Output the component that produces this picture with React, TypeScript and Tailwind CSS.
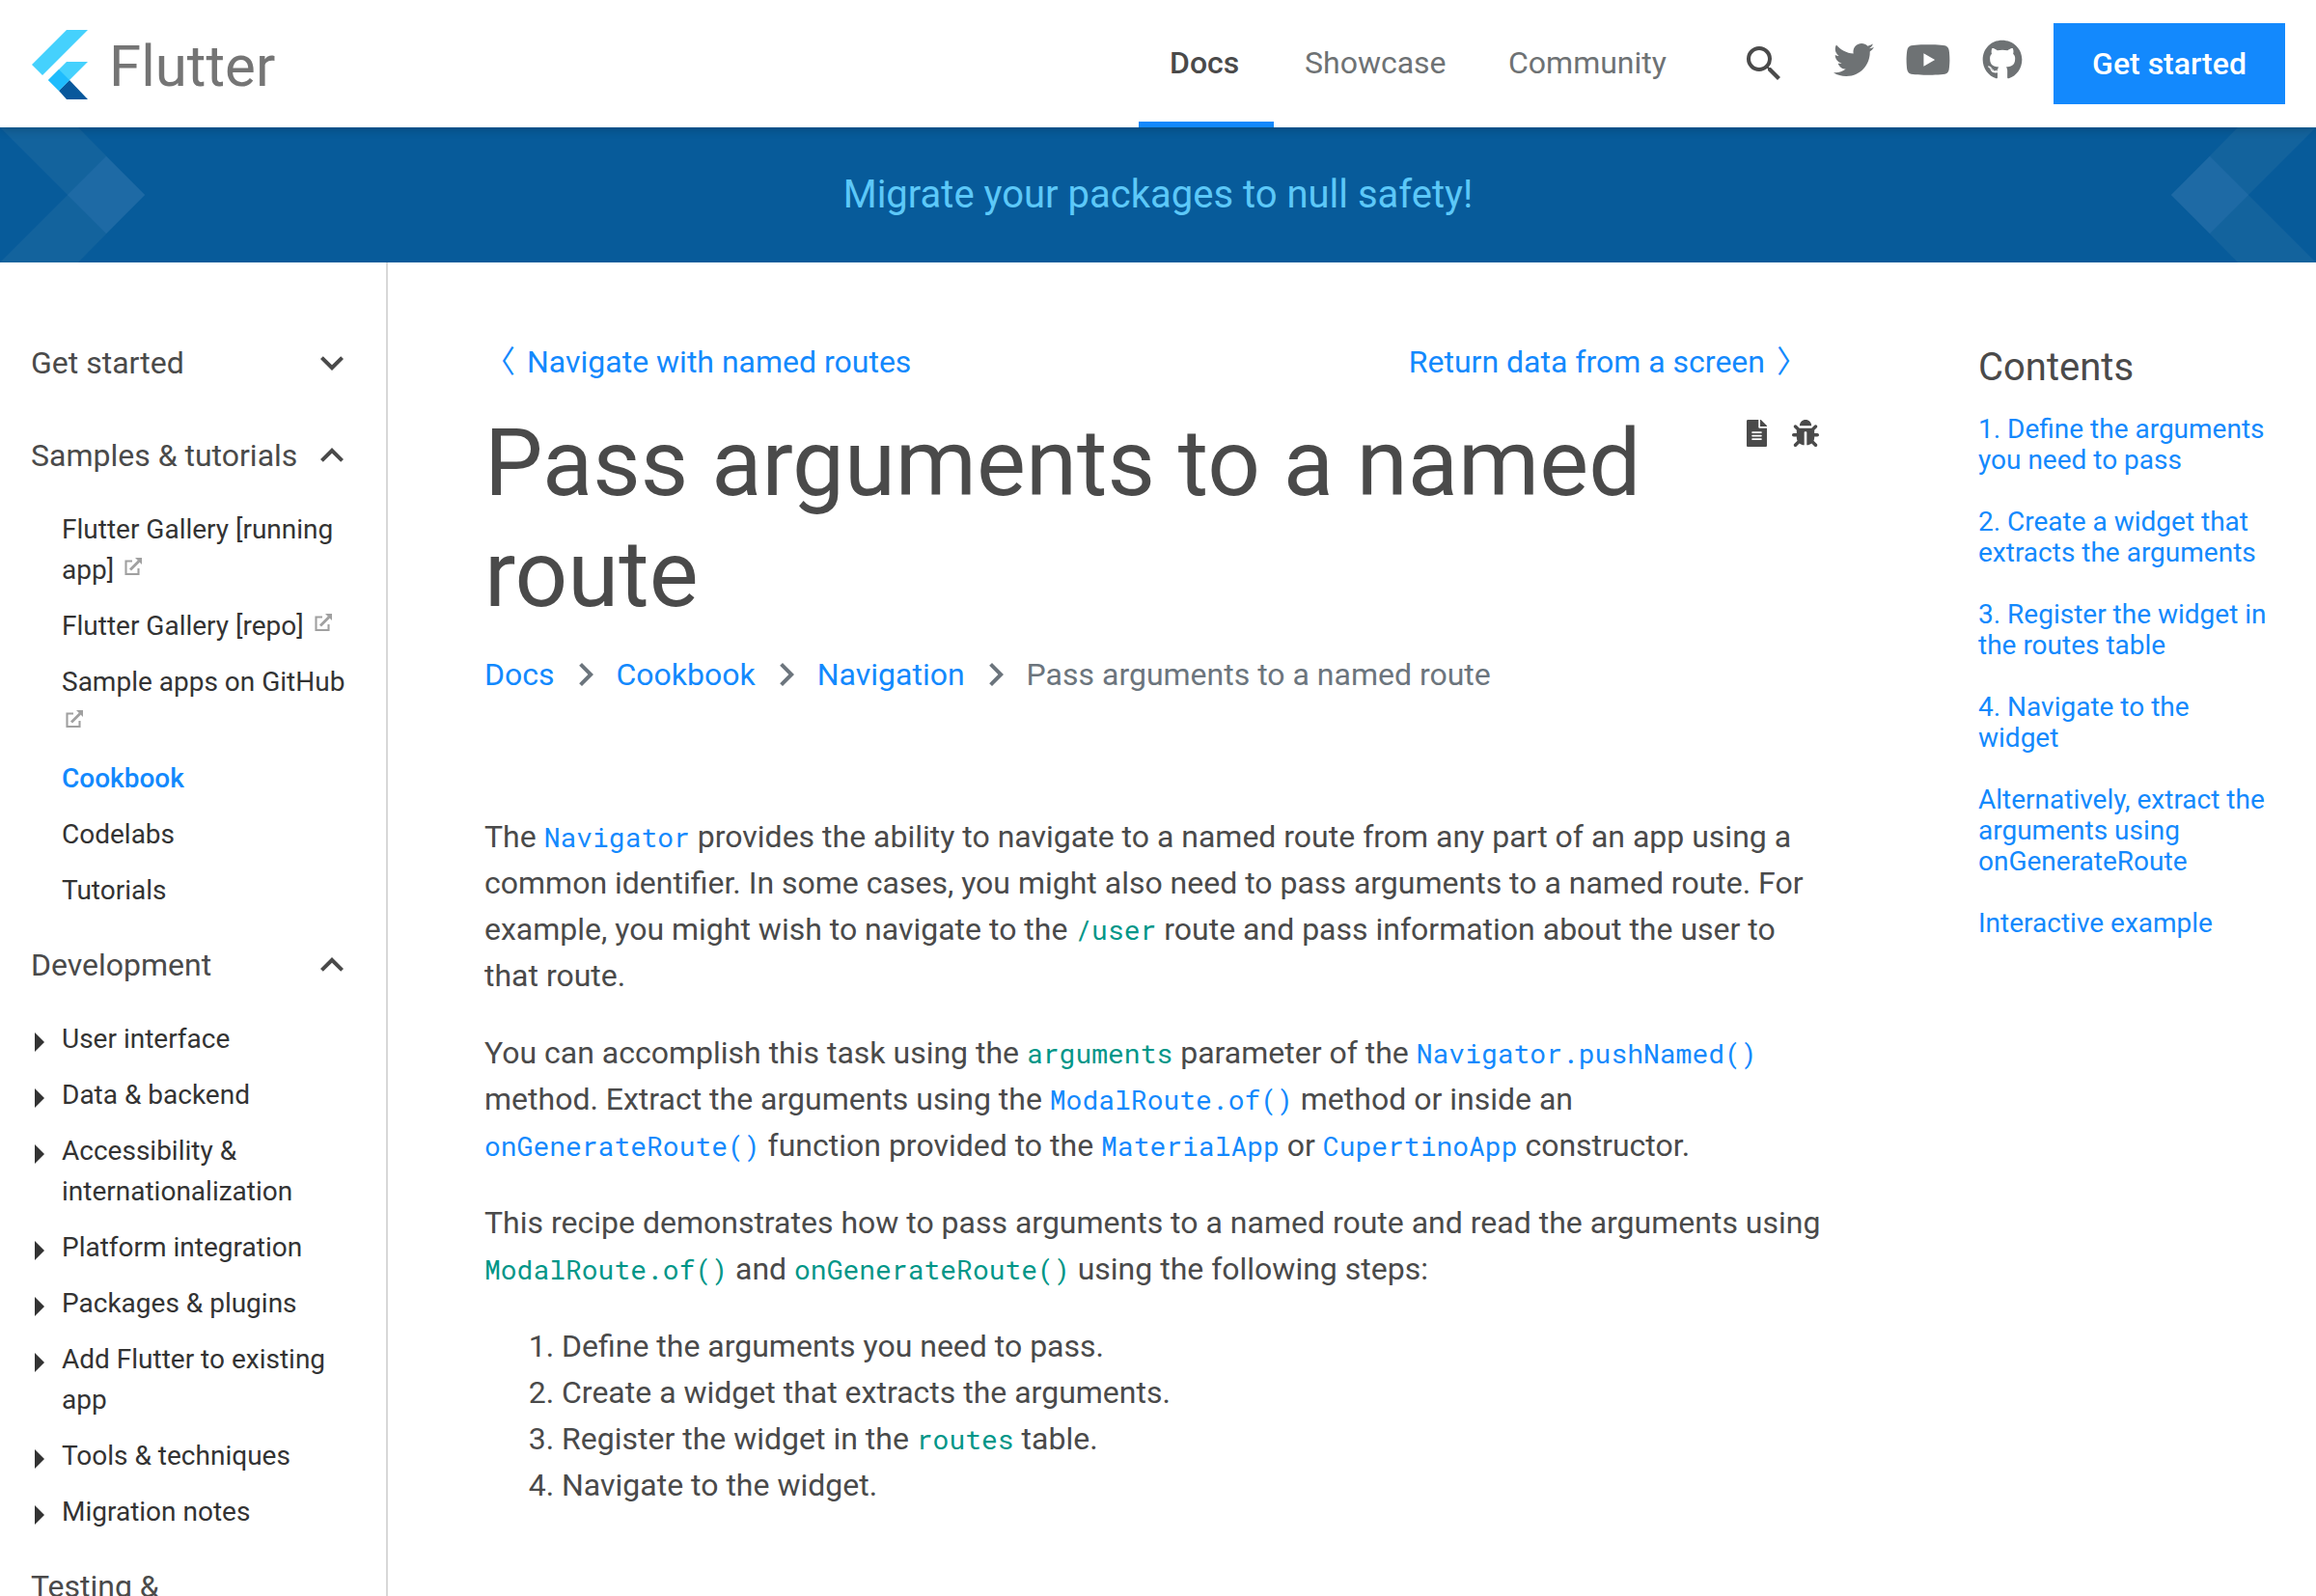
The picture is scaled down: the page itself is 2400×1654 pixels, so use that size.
import type { ReactNode } from "react";
import { FaBug, FaFileAlt, FaGithub, FaTwitter, FaYoutube } from "react-icons/fa";
import { MdChevronRight, MdExpandLess, MdExpandMore, MdSearch } from "react-icons/md";

function FlutterMark() {
  return (
    <svg viewBox="0 0 58 72" className="h-[72px] w-[58px]" aria-hidden="true">
      <path d="M36 0H58L11 47L0 36Z" fill="#45d1fd" />
      <path d="M36 33H58L28 63L17 52Z" fill="#45d1fd" />
      <path d="M39 52L58 72H36L28 63Z" fill="#08589c" />
      <path d="M28 41L39 52L28 63L17 52Z" fill="#1fbcfd" />
    </svg>
  );
}

function BannerChevron({ className }: { className: string }) {
  return (
    <svg viewBox="0 0 150 140" className={className} aria-hidden="true">
      <path d="M0 0H81L150 70L110 110Z" fill="#13639d" />
      <path d="M0 140H81L150 70L110 30Z" fill="#13639d" />
      <path d="M70 70L110 30L150 70L110 110Z" fill="#1e6aa5" />
    </svg>
  );
}

function ExternalIcon() {
  return (
    <svg viewBox="0 0 18 18" className="ml-1 inline h-[18px] w-[18px] -translate-y-1 align-baseline" aria-hidden="true">
      <path d="M8 3.5H1.5V17H14.5V11" fill="none" stroke="#a0a0a0" strokeWidth="2.1" />
      <path d="M6 12.5L15 3.5" stroke="#a0a0a0" strokeWidth="2.8" />
      <path d="M11 0H18V7Z" fill="#a0a0a0" />
    </svg>
  );
}

function Heading({ label, open }: { label: string; open?: boolean }) {
  const Icon = open ? MdExpandLess : MdExpandMore;
  return (
    <button className="flex w-full items-center justify-between py-6 pl-8 pr-8 text-left text-[32px] leading-[48px] text-[#4a4a4a]">
      <span>{label}</span>
      <Icon className="h-12 w-12 shrink-0" />
    </button>
  );
}

function Item({ label, external, active, arrow }: { label: string; external?: boolean; active?: boolean; arrow?: boolean }) {
  return (
    <li>
      <a href="#" className={active ? "flex py-2 pl-9 pr-6 font-medium text-[#1389fd]" : "flex py-2 pl-9 pr-6 text-[#333]"}>
        <span className="w-7 shrink-0 pt-[14px]">
          {arrow && (
            <svg viewBox="0 0 10 20" className="h-5 w-[10px]" aria-hidden="true">
              <path d="M0 0L10 10L0 20Z" fill="#333" />
            </svg>
          )}
        </span>
        <span>
          {label}
          {external && <> <ExternalIcon /></>}
        </span>
      </a>
    </li>
  );
}

function Code({ children }: { children: ReactNode }) {
  return <code className="font-['Roboto_Mono','Liberation_Mono',monospace] text-[28px] leading-none text-[#009688]">{children}</code>;
}

function CodeLink({ children }: { children: ReactNode }) {
  return (
    <a href="#" className="font-['Roboto_Mono','Liberation_Mono',monospace] text-[28px] leading-none text-[#1389fd]">
      {children}
    </a>
  );
}

const crumbs = ["Docs", "Cookbook", "Navigation"];
const contents = [
  "1. Define the arguments you need to pass",
  "2. Create a widget that extracts the arguments",
  "3. Register the widget in the routes table",
  "4. Navigate to the widget",
  "Alternatively, extract the arguments using onGenerateRoute",
  "Interactive example",
];
const development = [
  "User interface",
  "Data & backend",
  "Accessibility & internationalization",
  "Platform integration",
  "Packages & plugins",
  "Add Flutter to existing app",
  "Tools & techniques",
  "Migration notes",
];

export default function App() {
  return (
    <div className="flex h-screen flex-col overflow-hidden bg-white font-[Roboto,'Noto_Sans_CJK_SC',sans-serif] text-[32px] leading-[48px] text-[#4a4a4a]">
      <header className="relative z-10 flex h-[132px] shrink-0 items-center pl-[33px] pr-8 shadow-[0_2px_10px_rgba(0,0,0,0.2)]">
        <a href="#" className="flex items-center gap-[22px] pt-0.5 text-[#757575]">
          <FlutterMark />
          <span className="pt-1 text-[60px] leading-[72px]">Flutter</span>
        </a>
        <nav className="ml-auto flex self-stretch leading-[130px] text-[#6e7274]">
          <a href="#" className="w-[140px] border-b-[6px] border-[#1389fd] px-8 font-medium text-[#4a4a4a]">Docs</a>
          <a href="#" className="w-[211px] px-8">Showcase</a>
          <a href="#" className="w-[233px] px-8">Community</a>
        </nav>
        <button aria-label="Search" className="ml-10 mr-12 text-[#4a4a4a]">
          <MdSearch className="h-12 w-12" />
        </button>
        <div className="mb-2 flex gap-8 text-[#6e7274]">
          <a href="#" aria-label="Twitter"><FaTwitter className="h-[42px] w-[42px]" /></a>
          <a href="#" aria-label="YouTube"><FaYoutube className="h-[42px] w-12" /></a>
          <a href="#" aria-label="GitHub"><FaGithub className="h-[42px] w-[42px]" /></a>
        </div>
        <button className="ml-8 w-60 bg-[#1389fd] py-[18px] font-medium text-white">Get started</button>
      </header>

      <div className="flex h-[140px] shrink-0 items-center justify-between bg-[#075b9a]">
        <BannerChevron className="h-[140px] w-[150px]" />
        <a href="#" className="text-[40px] text-[#5cc8f8]">Migrate your packages to null safety!</a>
        <BannerChevron className="h-[140px] w-[150px] rotate-180" />
      </div>

      <div className="flex min-h-0 flex-1">
        <aside className="w-[402px] shrink-0 overflow-hidden border-r-2 border-[#d8d8d8] pt-14">
          <Heading label="Get started" />
          <Heading label="Samples & tutorials" open />
          <ul className="text-[28px] leading-[42px]">
            <Item label="Flutter Gallery [running app]" external />
            <Item label="Flutter Gallery [repo]" external />
            <Item label="Sample apps on GitHub" external />
            <Item label="Cookbook" active />
            <Item label="Codelabs" />
            <Item label="Tutorials" />
          </ul>
          <Heading label="Development" open />
          <ul className="text-[28px] leading-[42px]">
            {development.map((label) => (
              <Item key={label} label={label} arrow />
            ))}
          </ul>
          <Heading label="Testing & debugging" />
        </aside>

        <main className="flex-1 pl-[100px] pr-[161px] pt-[79px]">
          <div className="flex justify-between text-[#1389fd]">
            <a href="#" className="flex gap-3"><span>〈</span>Navigate with named routes</a>
            <a href="#" className="mr-4 flex gap-3">Return data from a screen<span>〉</span></a>
          </div>
          <div className="mt-6 flex justify-between">
            <h1 className="text-[96px] leading-[115px]">Pass arguments to a named route</h1>
            <div className="mr-1 flex shrink-0 gap-[26px] pt-3">
              <a href="#" aria-label="View page source"><FaFileAlt className="h-7 w-[21px]" /></a>
              <a href="#" aria-label="Report an issue"><FaBug className="h-7 w-7" /></a>
            </div>
          </div>
          <nav aria-label="Breadcrumb" className="mt-[22px] flex items-center text-[#6c757d]">
            {crumbs.map((crumb) => (
              <span key={crumb} className="flex items-center">
                <a href="#" className="text-[#1389fd]">{crumb}</a>
                <MdChevronRight className="mx-2 h-12 w-12" />
              </span>
            ))}
            <span>Pass arguments to a named route</span>
          </nav>

          <div className="mt-[120px] flex flex-col gap-8">
            <p>
              The <CodeLink>Navigator</CodeLink> provides the ability to navigate to a named route from any part of an app using a
              common identifier. In some cases, you might also need to pass arguments to a named route. For example, you might wish
              to navigate to the <Code>/user</Code> route and pass information about the user to that route.
            </p>
            <p>
              You can accomplish this task using the <Code>arguments</Code> parameter of the{" "}
              <CodeLink>Navigator.pushNamed()</CodeLink> method. Extract the arguments using the{" "}
              <CodeLink>ModalRoute.of()</CodeLink> method or inside an <CodeLink>onGenerateRoute()</CodeLink> function provided to
              the <CodeLink>MaterialApp</CodeLink> or <CodeLink>CupertinoApp</CodeLink> constructor.
            </p>
            <p>
              This recipe demonstrates how to pass arguments to a named route and read the arguments using{" "}
              <Code>ModalRoute.of()</Code> and <Code>onGenerateRoute()</Code> using the following steps:
            </p>
            <ol className="list-decimal pl-20">
              <li>Define the arguments you need to pass.</li>
              <li>Create a widget that extracts the arguments.</li>
              <li>Register the widget in the <Code>routes</Code> table.</li>
              <li>Navigate to the widget.</li>
            </ol>
          </div>
        </main>

        <aside className="w-[350px] shrink-0 pr-12 pt-[85px]">
          <h2 className="text-[40px]">Contents</h2>
          <ul className="mt-6 flex flex-col gap-8 text-[28px] leading-8">
            {contents.map((entry) => (
              <li key={entry}>
                <a href="#" className="block text-[#1389fd]">{entry}</a>
              </li>
            ))}
          </ul>
        </aside>
      </div>
    </div>
  );
}
